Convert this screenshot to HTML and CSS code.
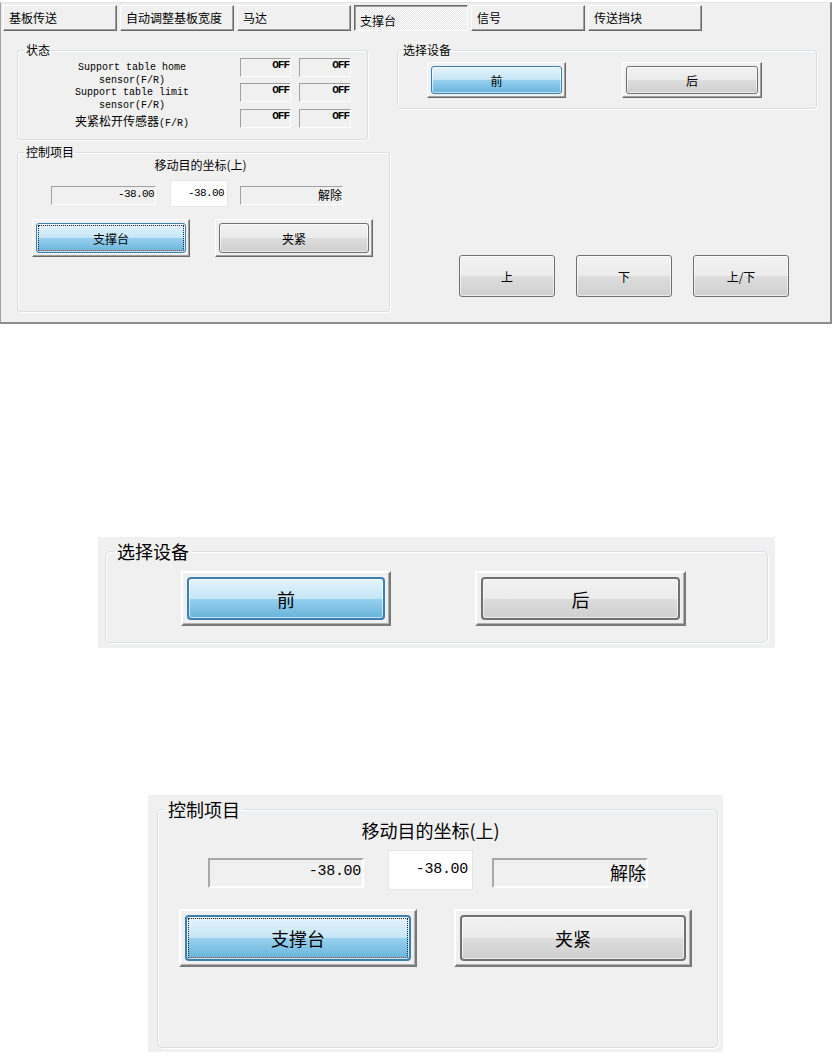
FILE: index.html
```html
<!DOCTYPE html>
<html lang="zh-CN">

<head>
    <meta charset="UTF-8">
    <meta name="viewport" content="width=device-width, initial-scale=1.0">
    <title>支撑台</title>
    <link rel="stylesheet" href="styles.css">
</head>

<body>

    <div id="dialog">
        <ul id="tab-box">
            <li>基板传送</li>
            <li>自动调整基板宽度</li>
            <li>马达</li>
            <li class="active">支撑台</li>
            <li>信号</li>
            <li>传送挡块</li>
        </ul>

        <div id="page">
            <div class="col-left">
                <fieldset class="group status">
                    <legend>状态</legend>
                    <div class="sensor-row">
                        <div class="sensor-name">Support table home<br>sensor(F/R)</div>
                        <div class="field off">OFF</div>
                        <div class="field off">OFF</div>
                    </div>
                    <div class="sensor-row">
                        <div class="sensor-name">Support table limit<br>sensor(F/R)</div>
                        <div class="field off">OFF</div>
                        <div class="field off">OFF</div>
                    </div>
                    <div class="sensor-row">
                        <div class="sensor-name"><span class="cjk">夹紧松开传感器</span>(F/R)</div>
                        <div class="field off">OFF</div>
                        <div class="field off">OFF</div>
                    </div>
                </fieldset>

                <fieldset class="group control">
                    <legend>控制项目</legend>
                    <div class="target-title">移动目的坐标(上)</div>
                    <div class="target-row">
                        <div class="field num pos">-38.00</div>
                        <div class="edit num">-38.00</div>
                        <div class="field state">解除</div>
                    </div>
                    <div class="btn-row">
                        <div class="frame"><button class="btn blue focus">支撑台</button></div>
                        <div class="frame"><button class="btn">夹紧</button></div>
                    </div>
                </fieldset>
            </div>

            <div class="col-right">
                <fieldset class="group device">
                    <legend>选择设备</legend>
                    <div class="btn-row">
                        <div class="frame"><button class="btn blue">前</button></div>
                        <div class="frame"><button class="btn">后</button></div>
                    </div>
                </fieldset>
                <div class="move-row">
                    <button class="btn">上</button>
                    <button class="btn">下</button>
                    <button class="btn">上/下</button>
                </div>
            </div>
        </div>
    </div>

    <!-- 放大图: 选择设备 -->
    <div class="zoom zoom-device">
        <fieldset class="group">
            <legend>选择设备</legend>
            <div class="btn-row">
                <div class="frame"><button class="btn blue">前</button></div>
                <div class="frame"><button class="btn">后</button></div>
            </div>
        </fieldset>
    </div>

    <!-- 放大图: 控制项目 -->
    <div class="zoom zoom-control">
        <fieldset class="group">
            <legend>控制项目</legend>
            <div class="target-title">移动目的坐标(上)</div>
            <div class="target-row">
                <div class="field num pos">-38.00</div>
                <div class="edit num">-38.00</div>
                <div class="field state">解除</div>
            </div>
            <div class="btn-row">
                <div class="frame"><button class="btn blue focus">支撑台</button></div>
                <div class="frame"><button class="btn">夹紧</button></div>
            </div>
        </fieldset>
    </div>

</body>

</html>
```

FILE: styles.css
```css
* {
    margin: 0;
    padding: 0;
    box-sizing: border-box;
}

ul {
    list-style: none;
}

body {
    background: #fff;
    color: #000;
    font: 12px "Noto Sans CJK SC", sans-serif;
}

button {
    font: inherit;
    color: inherit;
}

/* 对话框 */
#dialog {
    width: 832px;
    height: 322px;
    margin-top: 2px;
    padding: 2px 0 0 2px;
    background: #f0f0f0;
    border-top: 1px solid #e3e3e3;
    border-left: 1px solid #a0a0a0;
    border-right: 2px solid #8c8c8c;
    border-bottom: 2px solid #8c8c8c;
}

#tab-box {
    display: flex;
    gap: 3px;
}

#tab-box li {
    width: 114px;
    height: 26px;
    padding: 0 5px;
    line-height: 24px;
    white-space: nowrap;
    border: 1px solid;
    border-color: #fff #696969 #696969 #fff;
    box-shadow: inset -1px -1px #a0a0a0;
}

#tab-box li.active {
    padding-top: 3px;
    border-color: #696969 #fff #fff #696969;
    box-shadow: inset 1px 1px #a0a0a0;
    background: repeating-conic-gradient(#fff 0 25%, #e4e4e4 0 50%) 0 0 / 2px 2px;
}

#page {
    display: flex;
    gap: 7px;
    margin: 12px 0 0 14px;
}

.col-left {
    width: 373px;
    display: flex;
    flex-direction: column;
    align-items: flex-start;
    gap: 5px;
}

.col-right {
    width: 420px;
}

/* 分组框 */
.group {
    border: 1px solid #d5dfe5;
    border-radius: 3px;
    box-shadow: inset 1px 1px #fff, 1px 1px #fff;
}

.group legend {
    margin-left: 6px;
    padding: 0 2px;
    line-height: 14px;
}

.status {
    width: 351px;
    padding: 1px 0 11px;
}

.sensor-row {
    display: flex;
    height: 19px;
}

.sensor-row + .sensor-row {
    margin-top: 6px;
}

.sensor-row:last-child {
    margin-top: 7px;
}

.sensor-name {
    width: 222px;
    padding: 3px 0 0 6px;
    text-align: center;
    font: 10px/13px "Liberation Mono", monospace;
    white-space: nowrap;
}

.sensor-name .cjk {
    font: 12px "Noto Sans CJK SC", sans-serif;
}

.field {
    background: #f0f0f0;
    border: 1px solid;
    border-color: #a0a0a0 #fff #fff #a0a0a0;
    text-align: right;
    white-space: nowrap;
}

.field.off {
    width: 51px;
    padding-right: 1px;
    font: bold 11px/13px "Liberation Mono", monospace;
    letter-spacing: -1px;
}

.field.off + .field.off {
    width: 52px;
    margin-left: 8px;
}

.control {
    width: 373px;
    padding: 0 0 54px;
}

.target-title {
    padding-right: 6px;
    line-height: 12px;
    text-align: center;
}

.target-row {
    display: flex;
    align-items: flex-start;
    margin: 9px 0 0 33px;
}

.num {
    font-family: "Liberation Mono", monospace;
    font-size: 11px;
    letter-spacing: -0.6px;
}

.target-row .pos {
    width: 105px;
    height: 19px;
    margin-top: 6px;
    padding-right: 1px;
    line-height: 15px;
}

.target-row .edit {
    width: 58px;
    height: 27px;
    margin-left: 14px;
    padding-right: 3px;
    background: #fff;
    border: 1px solid #e2e6ea;
    text-align: right;
    line-height: 24px;
}

.target-row .state {
    width: 103px;
    height: 19px;
    margin: 6px 0 0 12px;
    line-height: 16px;
}

.btn-row {
    display: flex;
}

.control .btn-row {
    margin: 12px 0 0 14px;
    gap: 25px;
}

.control .frame {
    width: 158px;
    height: 38px;
}

.frame {
    padding: 3px;
    border: 1px solid;
    border-color: #fff #696969 #696969 #fff;
    box-shadow: inset -1px -1px #a0a0a0;
}

/* 按钮 */
.btn {
    display: block;
    position: relative;
    width: 100%;
    height: 100%;
    border: 1px solid #707070;
    border-radius: 3px;
    background: linear-gradient(#f2f2f2, #ebebeb 50%, #dddddd 50%, #cfcfcf);
    box-shadow: inset 0 0 0 1px rgba(255, 255, 255, 0.6);
}

.btn.blue {
    border-color: #3c7fb1;
    background: linear-gradient(#e5f4fc, #c4e5f6 50%, #98d1ef 50%, #68b3db);
}

.btn.focus::after {
    content: "";
    position: absolute;
    inset: 1px;
    border: 1px dotted;
    border-color: #222 #222 #b4461f #222;
}

.device {
    padding: 0 0 10px;
}

.device legend {
    margin-left: 3px;
}

.device .btn-row {
    margin: 5px 0 0 29px;
    gap: 56px;
}

.device .frame {
    width: 139px;
    height: 36px;
}

.device .frame + .frame {
    width: 140px;
}

.move-row {
    display: flex;
    gap: 21px;
    margin: 146px 0 0 62px;
}

.move-row .btn {
    width: 96px;
    height: 42px;
}

/* 放大图 */
.zoom {
    background: #f0f0f0;
    font-size: 18px;
}

.zoom .group {
    border-radius: 5px;
}

.zoom .group legend {
    line-height: 21px;
    padding: 0 3px;
}

.zoom .frame {
    padding: 4px;
    border-width: 2px;
    border-color: #fff #7a7a7a #7a7a7a #fff;
    box-shadow: inset -1px -1px #b0b0b0;
}

.zoom .btn {
    border-width: 2px;
    border-radius: 4px;
}

.zoom-device {
    width: 677px;
    margin: 213px 0 0 98px;
    padding: 4px 7px 5px;
}

.zoom-device .group {
    padding: 0 0 16px;
}

.zoom-device legend {
    margin-left: 8px;
}

.zoom-device .btn-row {
    margin: 9px 0 0 75px;
    gap: 84px;
}

.zoom-device .frame {
    width: 210px;
    height: 55px;
}

.zoom-device .frame + .frame {
    width: 211px;
}

.zoom-control {
    width: 575px;
    margin: 147px 0 0 148px;
    padding: 4px 5px 4px 9px;
}

.zoom-control .group {
    padding: 0 0 80px;
}

.zoom-control legend {
    margin-left: 7px;
}

.zoom-control .target-title {
    padding-right: 14px;
    line-height: 20px;
}

.zoom-control .target-row {
    margin: 10px 0 0 50px;
}

.zoom-control .num {
    font-size: 15px;
    letter-spacing: -0.3px;
}

.zoom-control .field {
    border-width: 2px;
    border-color: #a8a8a8 #fff #fff #a8a8a8;
}

.zoom-control .pos {
    width: 156px;
    height: 30px;
    margin-top: 8px;
    padding-right: 1px;
    line-height: 24px;
}

.zoom-control .edit {
    width: 85px;
    height: 40px;
    margin-left: 24px;
    padding-right: 4px;
    line-height: 37px;
}

.zoom-control .state {
    width: 156px;
    height: 30px;
    margin: 8px 0 0 19px;
    line-height: 24px;
}

.zoom-control .btn-row {
    margin: 19px 0 0 21px;
    gap: 37px;
}

.zoom-control .frame {
    width: 238px;
    height: 58px;
}
```
